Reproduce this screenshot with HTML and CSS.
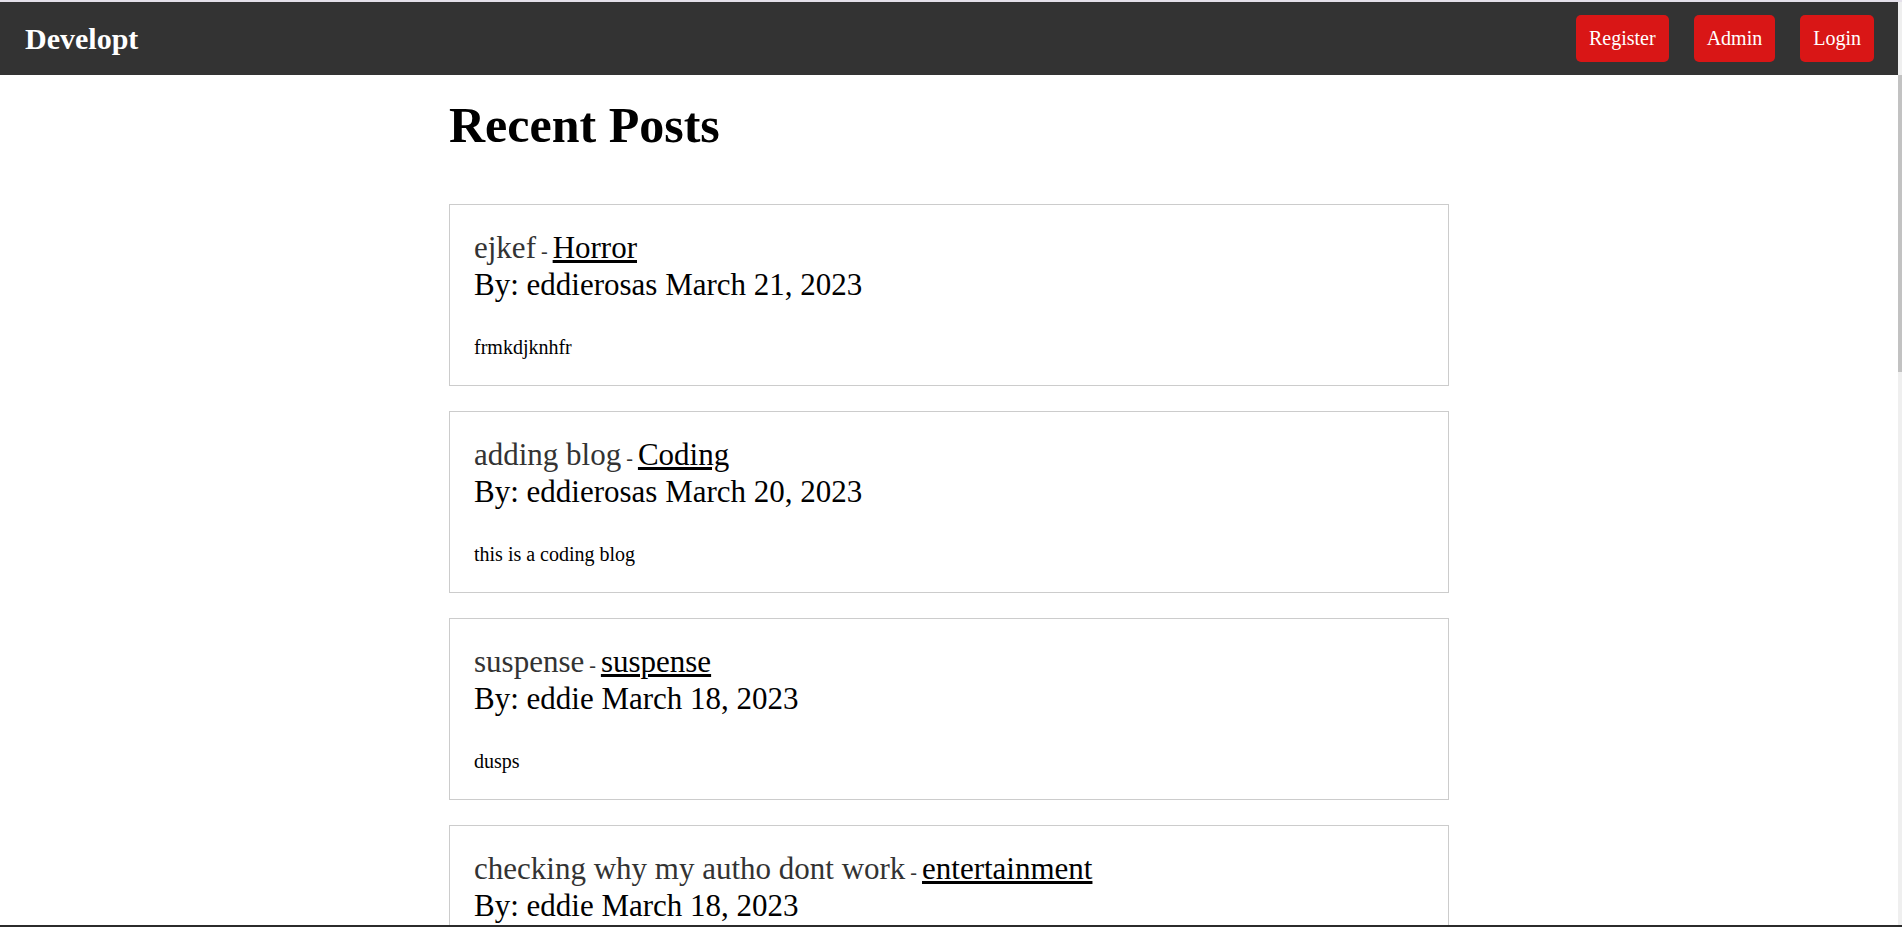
FILE: index.html
```html
<!DOCTYPE html>
<html lang="en">
<head>
<meta charset="utf-8">
<title>Developt</title>
<link rel="stylesheet" href="styles.css">
</head>
<body>
<div class="topline"></div>
<div class="frame">
  <div class="app">
    <header class="navbar">
      <a class="brand" href="#">Developt</a>
      <nav class="nav-buttons">
        <a class="btn" href="#">Register</a>
        <a class="btn" href="#">Admin</a>
        <a class="btn" href="#">Login</a>
      </nav>
    </header>
    <main class="container">
      <h1 class="page-title">Recent Posts</h1>
      <section class="posts">
        <article class="post">
          <div class="post-title">ejkef<span class="sep"> - </span><a class="cat" href="#">Horror</a></div>
          <div class="post-meta">By: eddierosas March 21, 2023</div>
          <p class="post-body">frmkdjknhfr</p>
        </article>
        <article class="post">
          <div class="post-title">adding blog<span class="sep"> - </span><a class="cat" href="#">Coding</a></div>
          <div class="post-meta">By: eddierosas March 20, 2023</div>
          <p class="post-body">this is a coding blog</p>
        </article>
        <article class="post">
          <div class="post-title">suspense<span class="sep"> - </span><a class="cat" href="#">suspense</a></div>
          <div class="post-meta">By: eddie March 18, 2023</div>
          <p class="post-body">dusps</p>
        </article>
        <article class="post">
          <div class="post-title">checking why my autho dont work<span class="sep"> - </span><a class="cat" href="#">entertainment</a></div>
          <div class="post-meta">By: eddie March 18, 2023</div>
        </article>
      </section>
    </main>
  </div>
  <div class="scrollbar"><div class="thumb"></div></div>
</div>
<div class="bottomline"></div>
</body>
</html>
```

FILE: styles.css
```css
html, body {
  margin: 0;
  padding: 0;
  height: 100%;
  overflow: hidden;
}

body {
  display: flex;
  flex-direction: column;
  background: #ffffff;
  font-family: "Liberation Serif", "Times New Roman", serif;
  color: #000;
}

.topline {
  height: 2px;
  flex: none;
  background: #e4e0ea;
}

.bottomline {
  height: 2px;
  flex: none;
  background: #2b2b2b;
}

.frame {
  flex: 1;
  display: flex;
  min-height: 0;
}

.app {
  flex: 1;
  min-width: 0;
  overflow: hidden;
}

.scrollbar {
  width: 4px;
  flex: none;
  background: #efefef;
  display: flex;
  flex-direction: column;
  padding-top: 73px;
}

.thumb {
  height: 297px;
  background: #c2c2c2;
}

.navbar {
  height: 73px;
  background: #333333;
  display: flex;
  align-items: center;
  justify-content: space-between;
  padding: 0 24px 0 25px;
}

.brand {
  color: #ffffff;
  font-weight: bold;
  font-size: 30px;
  text-decoration: none;
}

.nav-buttons {
  display: flex;
  gap: 25px;
}

.btn {
  display: block;
  background: #d91616;
  color: #ffffff;
  font-size: 20px;
  line-height: 23px;
  padding: 12px 13px;
  border-radius: 5px;
  text-decoration: none;
}

.container {
  width: 1000px;
  margin: 0 auto;
}

.page-title {
  font-size: 50px;
  font-weight: bold;
  line-height: 55px;
  margin: 23px 0 51px;
}

.posts {
  display: flex;
  flex-direction: column;
  gap: 25px;
}

.post {
  border: 1px solid #cccccc;
  padding: 26px 24px 27px;
}

.post-title {
  font-size: 31px;
  line-height: 33px;
  color: #333333;
}

.sep {
  font-size: 20px;
}

.cat {
  color: #000;
  text-decoration: underline;
  text-decoration-thickness: 3px;
  text-underline-offset: 2px;
}

.post-meta {
  font-size: 31px;
  line-height: 33px;
  color: #000;
}

.post-body {
  font-size: 20px;
  line-height: 22px;
  margin: 35px 0 0;
}
```
